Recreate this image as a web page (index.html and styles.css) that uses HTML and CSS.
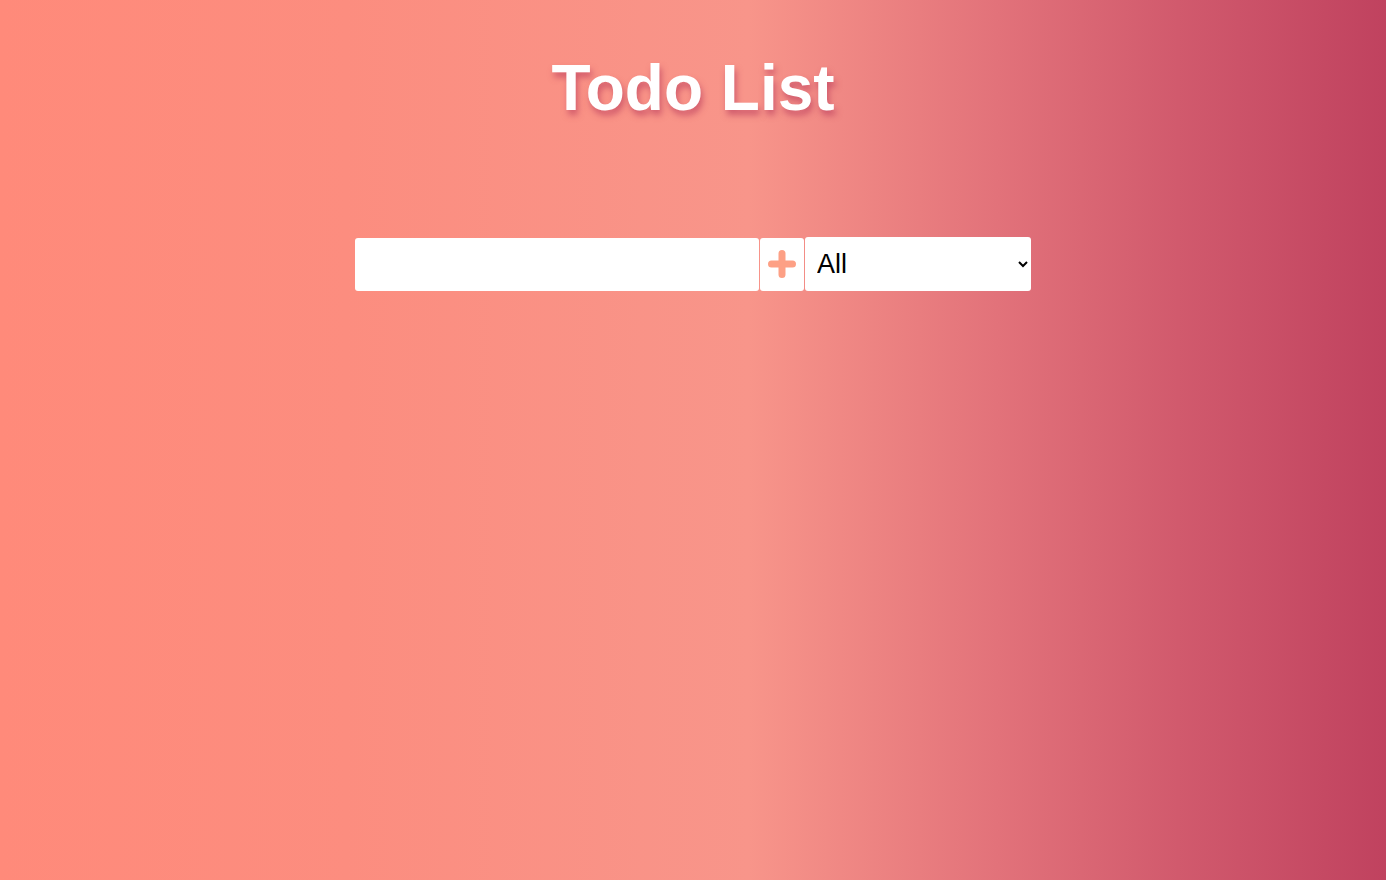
FILE: index.html
```html
<!DOCTYPE html>
<html lang="en">
<head>
<meta charset="utf-8">
<title>Todo List</title>
<link rel="stylesheet" href="styles.css">
</head>
<body>
  <header class="header">
    <h1 class="title">Todo List</h1>
  </header>
  <form class="todo-form">
    <input class="todo-input" type="text" aria-label="New todo">
    <button class="todo-button" type="button" aria-label="Add">
      <svg width="30" height="30" viewBox="0 0 30 30"><path d="M15 4.5v21M4.5 15h21" stroke="#fda085" stroke-width="7" stroke-linecap="round" fill="none"/></svg>
    </button>
    <select class="filter">
      <option>All</option>
      <option>Completed</option>
      <option>Uncompleted</option>
    </select>
  </form>
  <ul class="todo-list"></ul>
</body>
</html>
```

FILE: styles.css
```css
* { box-sizing: border-box; }
html, body { height: 100%; }
body {
  margin: 0;
  min-height: 100vh;
  font-family: "Liberation Sans", Arial, sans-serif;
  color: #fff;
  background: linear-gradient(to right, #ff8a7a 0%, #fc8d7f 25%, #f8958a 54%, #e2727a 72%, #d15a6d 85%, #c0425f 100%);
}
.header {
  display: flex;
  justify-content: center;
  padding-top: 50px;
}
.title {
  margin: 0;
  font-size: 64px;
  line-height: 76px;
  font-weight: 700;
  color: #fff;
  text-shadow: 2px 5px 6px rgba(176, 45, 85, 0.55);
}
.todo-form {
  display: flex;
  justify-content: center;
  align-items: center;
  gap: 1px;
  margin-top: 111px;
}
.todo-input {
  width: 404px;
  height: 53px;
  border: none;
  border-radius: 3px;
  background: #fff;
  padding: 0 12px;
  font-size: 26px;
  font-family: inherit;
  outline: none;
}
.todo-button {
  width: 44px;
  height: 53px;
  border: none;
  border-radius: 3px;
  background: #fff;
  padding: 0;
  display: flex;
  align-items: center;
  justify-content: center;
}
.filter {
  width: 226px;
  height: 54px;
  border: none;
  border-radius: 3px;
  background-color: #fff;
  color: #000;
  font-size: 27px;
  font-family: inherit;
  padding: 0 6px 0 8px;
  outline: none;
}
.todo-list { margin: 0; padding: 0; list-style: none; }
```
